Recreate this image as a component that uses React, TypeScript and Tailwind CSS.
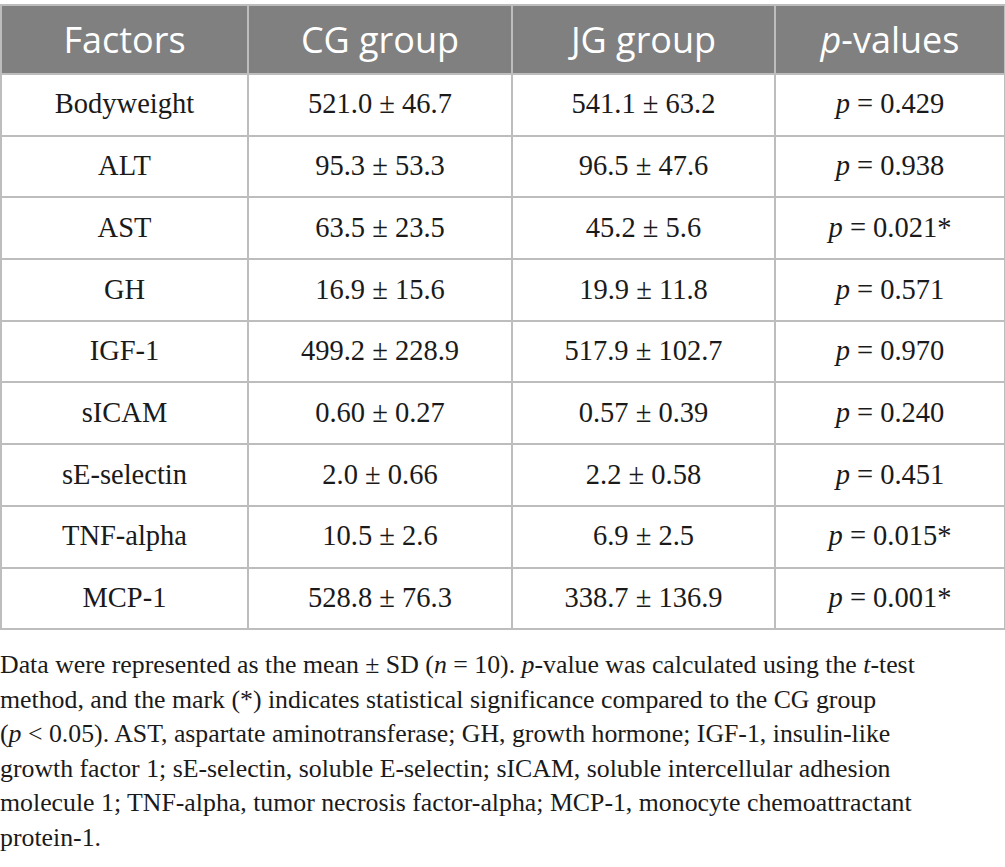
const rows: [string, string, string, string, boolean][] = [
  ["Bodyweight", "521.0 ± 46.7", "541.1 ± 63.2", "0.429", false],
  ["ALT", "95.3 ± 53.3", "96.5 ± 47.6", "0.938", false],
  ["AST", "63.5 ± 23.5", "45.2 ± 5.6", "0.021", true],
  ["GH", "16.9 ± 15.6", "19.9 ± 11.8", "0.571", false],
  ["IGF-1", "499.2 ± 228.9", "517.9 ± 102.7", "0.970", false],
  ["sICAM", "0.60 ± 0.27", "0.57 ± 0.39", "0.240", false],
  ["sE-selectin", "2.0 ± 0.66", "2.2 ± 0.58", "0.451", false],
  ["TNF-alpha", "10.5 ± 2.6", "6.9 ± 2.5", "0.015", true],
  ["MCP-1", "528.8 ± 76.3", "338.7 ± 136.9", "0.001", true],
];

const serif = "font-['Liberation_Serif','Times_New_Roman',serif]";

export default function App() {
  return (
    <div className="w-[1005px] bg-white pt-[4px]">
      <table className="w-[1004px] table-fixed border-collapse">
        <colgroup>
          <col className="w-[247px]" />
          <col className="w-[264px]" />
          <col className="w-[263px]" />
          <col className="w-[230px]" />
        </colgroup>
        <thead>
          <tr className="h-[69px] bg-[#808080] text-white font-['Open_Sans',sans-serif] text-[36px]">
            <th className="border-2 border-[#bdbdbd] font-normal">Factors</th>
            <th className="border-2 border-[#bdbdbd] font-normal">CG group</th>
            <th className="border-2 border-[#bdbdbd] font-normal">JG group</th>
            <th className="border-2 border-[#bdbdbd] font-normal">
              <i>p</i>-values
            </th>
          </tr>
        </thead>
        <tbody className={`${serif} text-[28.5px] text-[#1a1a1a]`}>
          {rows.map(([name, cg, jg, p, sig]) => (
            <tr key={name} className="h-[61.7px]">
              <td className="border-2 border-[#bdbdbd] text-center">{name}</td>
              <td className="border-2 border-[#bdbdbd] text-center">{cg}</td>
              <td className="border-2 border-[#bdbdbd] text-center">{jg}</td>
              <td className="border-2 border-[#bdbdbd] text-center">
                <i>p</i> = {p}
                {sig ? "*" : ""}
              </td>
            </tr>
          ))}
        </tbody>
      </table>
      <p className={`${serif} mt-[18px] text-[25.8px] leading-[34.5px] text-[#1a1a1a] whitespace-nowrap`}>
        Data were represented as the mean ± SD (<i>n</i> = 10). <i>p</i>-value was calculated using the <i>t</i>-test
        <br />
        method, and the mark (*) indicates statistical significance compared to the CG group
        <br />
        (<i>p</i> &lt; 0.05). AST, aspartate aminotransferase; GH, growth hormone; IGF-1, insulin-like
        <br />
        growth factor 1; sE-selectin, soluble E-selectin; sICAM, soluble intercellular adhesion
        <br />
        molecule 1; TNF-alpha, tumor necrosis factor-alpha; MCP-1, monocyte chemoattractant
        <br />
        protein-1.
      </p>
    </div>
  );
}
